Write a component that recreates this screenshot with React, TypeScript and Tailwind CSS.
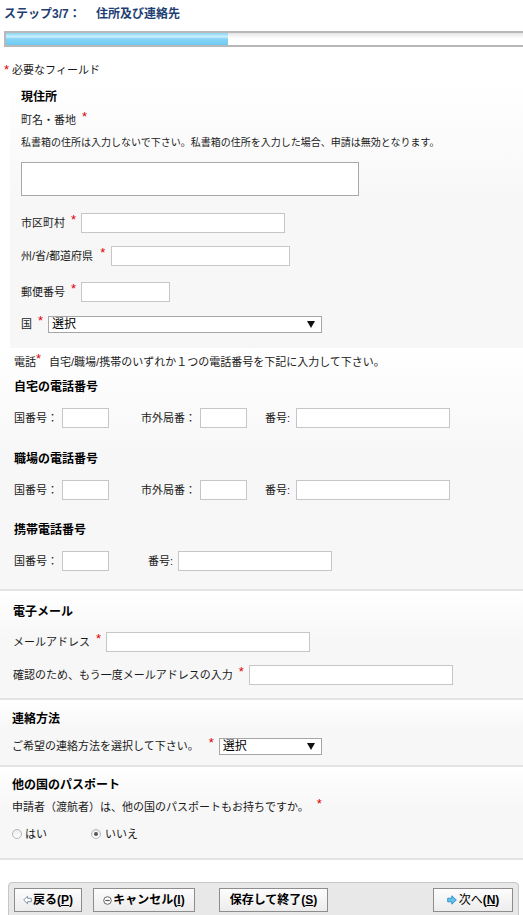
import React from 'react'

const font = "font-['Liberation_Sans','Noto_Sans_CJK_JP',sans-serif]"
const sectionBg = 'bg-[linear-gradient(to_bottom,#ffffff_0%,#f7f7f7_45%,#f7f7f7_100%)]'

function Req() {
  return <span className="text-[#e00000] text-[13px] leading-none relative -top-[3px]">*</span>
}

function TextInput({ w, h = 20 }: { w: number; h?: number }) {
  return (
    <div
      className="bg-white border border-[#c6c6c6] shrink-0"
      style={{ width: w, height: h }}
    />
  )
}

function FakeSelect({ w }: { w: number }) {
  return (
    <div
      className="h-[17px] bg-white border border-[#a6a6a6] flex items-center justify-between pl-[3px] pr-[6px] shrink-0"
      style={{ width: w }}
    >
      <span className="text-[12px] leading-none text-black">選択</span>
      <svg width="8" height="7" viewBox="0 0 8 7">
        <path d="M0 0 H8 L4 7 Z" fill="#111" />
      </svg>
    </div>
  )
}

function Radio({ checked }: { checked?: boolean }) {
  return (
    <span className="w-[10px] h-[10px] rounded-full border border-[#b5b5b5] bg-[linear-gradient(to_bottom,#ececec,#ffffff)] flex items-center justify-center">
      {checked && <span className="w-[4px] h-[4px] rounded-full bg-[#555]" />}
    </span>
  )
}

function PhoneRow({ mobile }: { mobile?: boolean }) {
  return (
    <div className="flex items-center h-[20px] text-[11px] text-[#1a1a1a]">
      <span className="w-[48px]">国番号：</span>
      <TextInput w={47} />
      {!mobile && (
        <>
          <span className="w-[59px] ml-[32px]">市外局番：</span>
          <TextInput w={47} />
        </>
      )}
      <span className={mobile ? 'w-[30px] ml-[39px]' : 'w-[31px] ml-[18px]'}>番号:</span>
      <TextInput w={154} />
    </div>
  )
}

function Btn({ children, w }: { children: React.ReactNode; w: number }) {
  return (
    <div
      className="h-[24px] border border-[#8d8d8d] bg-[linear-gradient(to_bottom,#fdfdfd,#ececec)] flex items-center justify-center text-[12px] font-bold text-black shrink-0"
      style={{ width: w }}
    >
      {children}
    </div>
  )
}

export default function App() {
  return (
    <div className={`w-[523px] h-[915px] overflow-hidden bg-white ${font}`}>
      <div className="pt-[5px] pl-[4px] leading-[18px] text-[12px] font-bold text-[#1d3e72]">
        ステップ3/7：　 住所及び連絡先
      </div>

      <div className="mt-[8px] ml-[4px] w-[530px] h-[16px] border-2 border-[#b8b8b8] flex bg-[linear-gradient(to_bottom,#e4e4e4,#ffffff_45%)]">
        <div className="w-[222px] h-full bg-[linear-gradient(to_bottom,#86d4f5_0%,#cdeffd_30%,#86d3f5_50%,#6ecbf2_100%)]" />
      </div>

      <div className="mt-[13px] pl-[4px] leading-[20px] text-[11px] text-[#1a1a1a]">
        <span className="text-[#e00000] text-[13px]">*</span> 必要なフィールド
      </div>

      {/* 現住所 */}
      <div className={`mt-[2px] ml-[10px] pl-[11px] pt-[5px] pb-[14px] ${sectionBg}`}>
        <div className="text-[12px] font-bold leading-[20px] text-black">現住所</div>
        <div className="mt-[3px] text-[11px] leading-[20px] text-[#1a1a1a]">
          町名・番地<span className="ml-[6px]"><Req /></span>
        </div>
        <div className="mt-[3px] text-[10px] leading-[20px] text-[#1a1a1a]">
          私書箱の住所は入力しないで下さい。私書箱の住所を入力した場合、申請は無効となります。
        </div>
        <div className="mt-[9px] w-[338px] h-[34px] bg-white border border-[#a8a8a8]" />

        <div className="mt-[17px] flex items-center text-[11px] text-[#1a1a1a] h-[20px]">
          <span>市区町村</span>
          <span className="ml-[6px] mr-[5px]"><Req /></span>
          <TextInput w={204} />
        </div>
        <div className="mt-[13px] flex items-center text-[11px] text-[#1a1a1a] h-[20px]">
          <span>州/省/都道府県</span>
          <span className="ml-[7px] mr-[6px]"><Req /></span>
          <TextInput w={179} />
        </div>
        <div className="mt-[16px] flex items-center text-[11px] text-[#1a1a1a] h-[20px]">
          <span>郵便番号</span>
          <span className="ml-[6px] mr-[5px]"><Req /></span>
          <TextInput w={89} />
        </div>
        <div className="mt-[12px] flex items-center text-[11px] text-[#1a1a1a] h-[20px]">
          <span>国</span>
          <span className="ml-[6px] mr-[5px]"><Req /></span>
          <FakeSelect w={274} />
        </div>
      </div>

      {/* 電話 */}
      <div className={`pl-[14px] pt-[4px] pb-[18px] border-b-2 border-[#e4e4e4] ${sectionBg}`}>
        <div className="text-[11px] leading-[20px] text-[#1a1a1a]">
          電話<Req /><span className="ml-[8px]">自宅/職場/携帯のいずれか１つの電話番号を下記に入力して下さい。</span>
        </div>
        <div className="mt-[5px] text-[12px] font-bold leading-[20px] text-black">自宅の電話番号</div>
        <div className="mt-[11px]"><PhoneRow /></div>
        <div className="mt-[21px] text-[12px] font-bold leading-[20px] text-black">職場の電話番号</div>
        <div className="mt-[11px]"><PhoneRow /></div>
        <div className="mt-[20px] text-[12px] font-bold leading-[20px] text-black">携帯電話番号</div>
        <div className="mt-[11px]"><PhoneRow mobile /></div>
      </div>

      {/* 電子メール */}
      <div className={`pl-[13px] pt-[11px] pb-[13px] border-b-2 border-[#e4e4e4] ${sectionBg}`}>
        <div className="text-[12px] font-bold leading-[20px] text-black">電子メール</div>
        <div className="mt-[10px] flex items-center h-[20px] text-[11px] text-[#1a1a1a]">
          <span>メールアドレス</span>
          <span className="ml-[6px] mr-[5px]"><Req /></span>
          <TextInput w={204} />
        </div>
        <div className="mt-[13px] flex items-center h-[20px] text-[11px] text-[#1a1a1a]">
          <span>確認のため、もう一度メールアドレスの入力</span>
          <span className="ml-[6px] mr-[5px]"><Req /></span>
          <TextInput w={204} />
        </div>
      </div>

      {/* 連絡方法 */}
      <div className={`pl-[12px] pt-[9px] pb-[9px] border-b-2 border-[#e4e4e4] ${sectionBg}`}>
        <div className="text-[12px] font-bold leading-[20px] text-black">連絡方法</div>
        <div className="mt-[7px] flex items-center h-[20px] text-[11px] text-[#1a1a1a]">
          <span>ご希望の連絡方法を選択して下さい。</span>
          <span className="ml-[10px] mr-[5px]"><Req /></span>
          <FakeSelect w={103} />
        </div>
      </div>

      {/* 他の国のパスポート */}
      <div className={`pl-[12px] pt-[8px] pb-[14px] border-b-2 border-[#e4e4e4] ${sectionBg}`}>
        <div className="text-[12px] font-bold leading-[20px] text-black">他の国のパスポート</div>
        <div className="mt-[2px] text-[11px] leading-[20px] text-[#1a1a1a]">
          申請者（渡航者）は、他の国のパスポートもお持ちですか。<span className="ml-[8px]"><Req /></span>
        </div>
        <div className="mt-[7px] flex items-center h-[20px] text-[11px] text-[#1a1a1a]">
          <Radio />
          <span className="ml-[3px] w-[66px]">はい</span>
          <Radio checked />
          <span className="ml-[4px]">いいえ</span>
        </div>
      </div>

      {/* ボタン */}
      <div className="mt-[22px] ml-[8px] mr-[4px] h-[60px] bg-[#e8e8e8] border border-[#c6c6c6] rounded-t-[4px] pt-[5px] px-[5px] flex items-start">
        <Btn w={68}>
          <svg width="9" height="10" viewBox="0 0 9 10" className="mr-[1px]">
            <path d="M0.7 5 L4.5 1.2 V3.3 H8.3 V6.7 H4.5 V8.8 Z" fill="#fff" stroke="#7f93ad" strokeWidth="1" />
          </svg>
          戻る(<span className="underline">P</span>)
        </Btn>
        <div className="ml-[11px]">
          <Btn w={102}>
            <svg width="9" height="9" viewBox="0 0 9 9" className="mr-[1px]">
              <circle cx="4.5" cy="4.5" r="3.8" fill="#fff" stroke="#666" strokeWidth="1" />
              <path d="M2.3 4.5 H6.7" stroke="#555" strokeWidth="1.2" />
            </svg>
            キャンセル(<span className="underline">I</span>)
          </Btn>
        </div>
        <div className="ml-[24px]">
          <Btn w={109}>
            保存して終了(<span className="underline">S</span>)
          </Btn>
        </div>
        <div className="ml-auto">
          <Btn w={80}>
            <svg width="10" height="10" viewBox="0 0 10 10" className="mr-[2px]">
              <path d="M0.7 3.2 H4.8 V0.8 L9.3 5 L4.8 9.2 V6.8 H0.7 Z" fill="#5fc3f0" stroke="#2f8cc4" strokeWidth="0.9" />
            </svg>
            <span className="font-normal">次へ</span>(<span className="underline">N</span>)
          </Btn>
        </div>
      </div>
    </div>
  )
}
